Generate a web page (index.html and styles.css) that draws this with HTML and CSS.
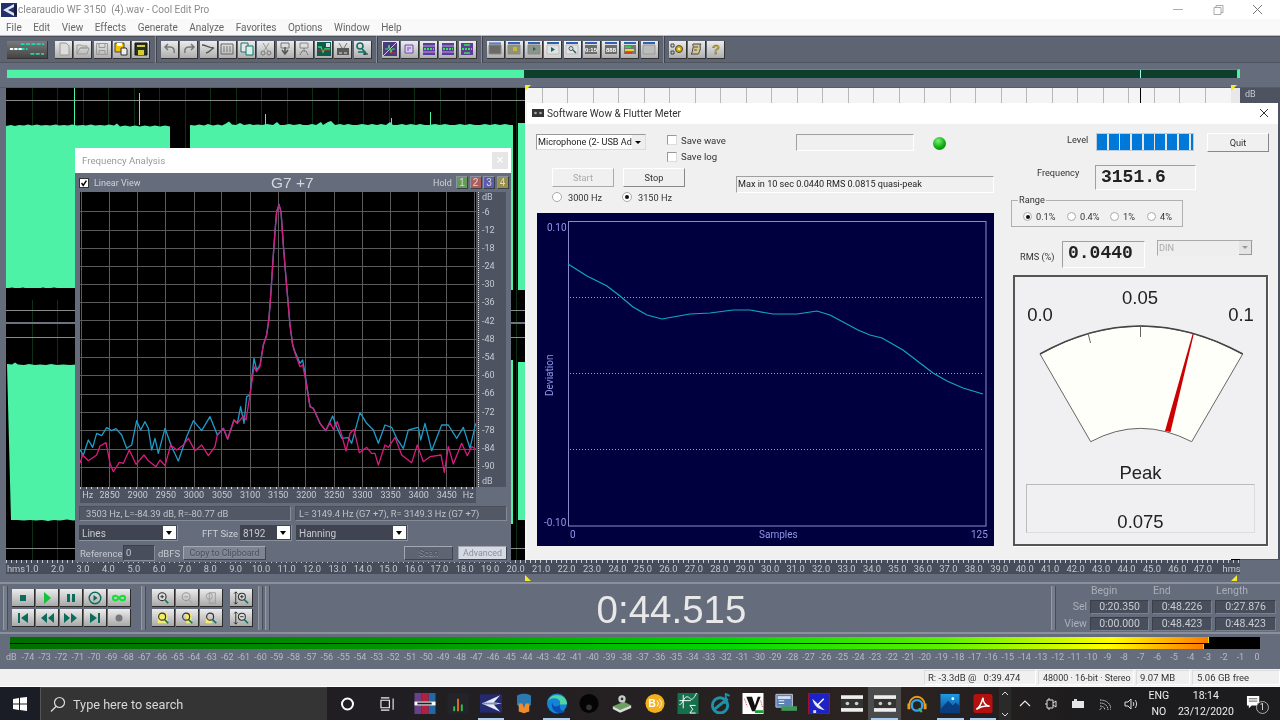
FILE: index.html
```html
<!DOCTYPE html>
<html lang="en">
<head>
<meta charset="utf-8">
<title>clearaudio WF 3150 (4).wav - Cool Edit Pro</title>
<link rel="stylesheet" href="styles.css">
</head>
<body>
<div class="screen">
  <header class="titlebar">
    <svg class="appicon" viewBox="0 0 16 14"><rect width="16" height="14" fill="#23306e"/><path d="M2 7 13 1v3L7 7l6 3v3z" fill="#dfe6f5"/><path d="M13 2h3v10h-3z" fill="#1a1a3a"/></svg>
    <span class="titletext">clearaudio WF 3150&nbsp; (4).wav - Cool Edit Pro</span>
    <span class="winctl">
      <svg viewBox="3 0 40 19"><path d="M18 9.500h10" stroke="#aaa" fill="none"/></svg>
      <svg viewBox="3 0 40 19"><path d="M19 7.500h7v7h-7zM21 7.500V5.500h7v7h-2" stroke="#aaa" fill="none"/></svg>
      <svg viewBox="3 0 40 19"><path d="m18 5 9 9m0-9-9 9" stroke="#777" fill="none"/></svg>
    </span>
  </header>
  <nav class="menubar">
    <span>File</span><span>Edit</span><span>View</span><span>Effects</span><span>Generate</span><span>Analyze</span><span>Favorites</span><span>Options</span><span>Window</span><span>Help</span>
  </nav>

  <main class="app">
    <div class="toolbar">
      <button class="tb tb-wide"><svg viewBox="0 0 41 18"><path d="M3 9h18M14 4h24M24 14h14" stroke="#27d6b0" stroke-width="2" stroke-dasharray="4 1.500"/><path d="M3 9h12" stroke="#fff" stroke-width="2" stroke-dasharray="3 1.500"/></svg></button>
      <span class="tb-gap g6"></span>
      <button class="tb"><svg viewBox="0 0 14 14"><path d="M3 1h6l3 3v9H3z" fill="#ddd" stroke="#999"/></svg></button>
      <button class="tb"><svg viewBox="0 0 14 14"><path d="M1 12V3h4l1 1h5v2H4l-3 6h10l2-6H4" fill="none" stroke="#999"/></svg></button>
      <button class="tb"><svg viewBox="0 0 14 14"><path d="M1.500 1.500h11v11h-11zM4 1.500v4h6v-4M4 12.500v-4h6v4" fill="none" stroke="#999"/></svg></button>
      <button class="tb"><svg viewBox="0 0 14 14"><path d="M1 1h9v9H1z" fill="#f2c200" stroke="#444"/><path d="M3 1h5v3H3z" fill="#fff"/><path d="M7 6h5l1 1v6H7z" fill="#eee" stroke="#333"/></svg></button>
      <button class="tb"><svg viewBox="0 0 14 14"><path d="M1 1h12v12H1z" fill="#23351f" stroke="#111"/><path d="M3 3h8v2H3z" fill="#d8c93a"/><path d="M4 8h6v5H4z" fill="#d8c93a"/></svg></button>
      <span class="tb-sep s11"></span>
      <button class="tb"><svg viewBox="0 0 14 14"><path d="M11 11c1-4-1-6-4-6H3M5 2 2 5l3 3" fill="none" stroke="#777" stroke-width="1.500"/></svg></button>
      <button class="tb"><svg viewBox="0 0 14 14"><path d="M3 11C2 7 4 5 7 5h4M9 2l3 3-3 3" fill="none" stroke="#777" stroke-width="1.500"/></svg></button>
      <button class="tb"><svg viewBox="0 0 14 14"><path d="M1 3c4 0 7 3 12 3-3 1-4 4-8 5" fill="none" stroke="#555" stroke-width="1.300"/></svg></button>
      <button class="tb"><svg viewBox="0 0 14 14"><path d="M1 2h12v10H1z" fill="none" stroke="#666"/><path d="M3 5h8M3 7h8M3 9h8" stroke="#777" stroke-dasharray="2 1"/></svg></button>
      <button class="tb"><svg viewBox="0 0 14 14"><path d="M1 1h7v9H1z" fill="#e8e8e8" stroke="#17756a"/><path d="M6 4h7v9H6z" fill="#d4f0e8" stroke="#17756a"/></svg></button>
      <button class="tb"><svg viewBox="0 0 14 14"><path d="m4 1 5 8M10 1 5 9" stroke="#999"/><circle cx="4" cy="11" r="2" fill="none" stroke="#777"/><circle cx="10" cy="11" r="2" fill="none" stroke="#777"/></svg></button>
      <button class="tb"><svg viewBox="0 0 14 14"><path d="M3 1h8v5H3z" fill="#ddd" stroke="#777"/><path d="M7 5v6M4 8l3 4 3-4" fill="none" stroke="#555" stroke-width="1.500"/></svg></button>
      <button class="tb"><svg viewBox="0 0 14 14"><path d="M3 1h8v5H3z" fill="#ddd" stroke="#888"/><path d="M7 6v3M3 13l2-4h4l2 4" fill="none" stroke="#666" stroke-dasharray="1.500 .5"/></svg></button>
      <button class="tb"><svg viewBox="0 0 14 14"><path d="M0 0h14v14H0z" fill="#0e5c50"/><path d="M1 5h3l2 5 2-3h5" fill="none" stroke="#2ee06a" stroke-width="1.300"/><path d="M1 8h12" stroke="#e02020"/><path d="M9 1h4v4H9z" fill="#ddd"/></svg></button>
      <button class="tb"><svg viewBox="0 0 14 14"><path d="M1 6h12v7H1z" fill="#5a5a5a"/><path d="m3 1 3 5m5-5L8 6" stroke="#777"/><path d="M3 11h3M8 11h3" stroke="#ddd"/></svg></button>
      <button class="tb"><svg viewBox="0 0 14 14"><circle cx="5" cy="4" r="3" fill="none" stroke="#136f63" stroke-width="1.600"/><path d="M7 7l3 3H3M10 10v3" fill="none" stroke="#136f63" stroke-width="1.600"/><path d="M8 12h5" stroke="#222"/></svg></button>
      <span class="tb-sep s10"></span>
      <button class="tb"><svg viewBox="0 0 14 14"><path d="M0 0h14v14H0z" fill="#4a3a7e"/><path d="m0 14 14-14" stroke="#d8c0f0"/><path d="M2 7h3l1-4 2 8 1-4h3" stroke="#3be05a" fill="none"/><path d="M7 11h6" stroke="#e02020"/></svg></button>
      <button class="tb"><svg viewBox="0 0 14 14"><path d="M3 3h8v8H3z" fill="#d9cdf0" stroke="#6a4eb0"/><path d="M5 6h4M5 8h2" stroke="#6a4eb0"/></svg></button>
      <button class="tb"><svg viewBox="0 0 14 14"><path d="M1 1h12v12H1z" fill="#5b3d97"/><path d="M1 4h12M1 10h12" stroke="#b6a0e0"/><path d="M2 7h10" stroke="#3be05a" stroke-width="2" stroke-dasharray="2 1"/></svg></button>
      <button class="tb"><svg viewBox="0 0 14 14"><path d="M1 1h12v12H1z" fill="#5b3d97"/><path d="M1 4h12M1 10h12" stroke="#b6a0e0"/><path d="M2 7h10" stroke="#3be05a" stroke-width="2" stroke-dasharray="2 1"/></svg></button>
      <button class="tb"><svg viewBox="0 0 14 14"><path d="M1 1h12v12H1z" fill="#5b3d97"/><path d="M4 3h6M4 11h6" stroke="#3be05a" stroke-width="1.500"/><path d="M2 7h10" stroke="#3be05a" stroke-width="2" stroke-dasharray="2 1"/></svg></button>
      <span class="tb-sep s10"></span>
      <button class="tb"><svg viewBox="0 0 14 14"><path d="M1 1h12M1 2h12" stroke="#2d62b5"/><path d="M1 3h12v9H1z" fill="#6a6a66" stroke="#888"/></svg></button>
      <button class="tb"><svg viewBox="0 0 14 14"><path d="M1 1h12" stroke="#2d62b5" stroke-width="2"/><path d="M1 3h12v9H1z" fill="#92927a" stroke="#888"/><path d="M6 5h4v4H6z" fill="#c0b840"/></svg></button>
      <button class="tb"><svg viewBox="0 0 14 14"><path d="M1 1h12" stroke="#2d62b5" stroke-width="2"/><path d="M1 3h12v9H1z" fill="#8a9488" stroke="#888"/><path d="m6 5 3 2-3 2z" fill="#176a60"/></svg></button>
      <button class="tb tb-lit"><svg viewBox="0 0 14 14"><path d="M1 1h12" stroke="#2d62b5" stroke-width="2"/><path d="M1 3h12v9H1z" fill="#dfe3e6" stroke="#bbb"/><path d="m5 5 4 2.500L5 10z" fill="#176a60"/></svg></button>
      <button class="tb tb-lit"><svg viewBox="0 0 14 14"><path d="M1 1h12" stroke="#2d62b5" stroke-width="2"/><path d="M1 3h12v9H1z" fill="#dfe3e6" stroke="#bbb"/><circle cx="6" cy="6.500" r="2" fill="none" stroke="#555"/><path d="m8 8 3 3" stroke="#176a60" stroke-width="1.500"/></svg></button>
      <button class="tb"><svg viewBox="0 0 14 14"><path d="M1 1h12" stroke="#2d62b5" stroke-width="2"/><path d="M1 3h12v9H1z" fill="#6c6c6c"/><text x="7" y="10" class="tbtxt">0:15</text></svg></button>
      <button class="tb"><svg viewBox="0 0 14 14"><path d="M1 1h12" stroke="#2d62b5" stroke-width="2"/><path d="M1 3h12v9H1z" fill="#6c6c6c"/><text x="7" y="10" class="tbtxt">888</text></svg></button>
      <button class="tb"><svg viewBox="0 0 14 14"><path d="M1 1h12" stroke="#2d62b5" stroke-width="2"/><path d="M1 3h12v9H1z" fill="#777"/><path d="M2 4h6v2H2z" fill="#2fd04a"/><path d="M2 7h9v2H2z" fill="#e8d82c"/><path d="M2 10h7v2H2z" fill="#e03a20"/></svg></button>
      <button class="tb"><svg viewBox="0 0 14 14"><path d="M1 1h12" stroke="#2d62b5" stroke-width="2"/><path d="M1 3h12v9H1z" fill="#bdbdbd" stroke="#999"/></svg></button>
      <span class="tb-sep s10"></span>
      <button class="tb"><svg viewBox="0 0 14 14"><path d="M1 2h3v3H1zM1 9h3v3H1z" fill="none" stroke="#444"/><circle cx="9" cy="7" r="3.500" fill="#d8b000" stroke="#444"/><circle cx="9" cy="7" r="1" fill="#fff"/></svg></button>
      <button class="tb"><svg viewBox="0 0 14 14"><path d="M4 2h8c-2 2 0 4-1 6-1 2-1 4-2 4H2c2-1 1-4 2-6s-1-3 0-4z" fill="#d8c890" stroke="#444"/><path d="M5 5h4M5 8h3" stroke="#555"/></svg></button>
      <button class="tb"><svg viewBox="0 0 14 14"><text x="7" y="12" class="tbq">?</text></svg></button>
    </div>

    <div class="overview">
      <div class="ov-sel"></div><div class="ov-rest"><i class="ov-mark"></i></div>
    </div>

    <div class="waverow">
      <svg class="wave" viewBox="6 88 1234 472">
        <rect x="6" y="88" width="1234" height="472" fill="#000"/>
        <rect x="525" y="88" width="706" height="472" fill="#f4f4f4"/>
        <path d="M32.500 88v472M57.500 88v472M83.500 88v472M108.500 88v472M134.500 88v472M159.500 88v472M185.500 88v472M210.500 88v472M236.500 88v472M261.500 88v472M287.500 88v472M312.500 88v472M338.500 88v472M363.500 88v472M389.500 88v472M414.500 88v472M440.500 88v472M465.500 88v472M491.500 88v472M516.500 88v472" stroke="#0c2f16" fill="none"/>
        <path d="M542.500 88v15M567.500 88v15M593.500 88v15M618.500 88v15M644.500 88v15M669.500 88v15M695.500 88v15M720.500 88v15M746.500 88v15M771.500 88v15M797.500 88v15M822.500 88v15M848.500 88v15M873.500 88v15M899.500 88v15M924.500 88v15M950.500 88v15M975.500 88v15M1001.500 88v15M1026.500 88v15M1052.500 88v15M1077.500 88v15M1103.500 88v15M1128.500 88v15M1154.500 88v15M1179.500 88v15M1205.500 88v15" stroke="#b8b8b8" fill="none"/>
        <path d="M6 100.500h519M6 310.500h519M6 337.500h519M6 548.500h519" stroke="#8a8a8a" fill="none"/>
        <path d="M6 323h519" stroke="#6c7280" stroke-width="2" fill="none"/>
        <path d="M1140.500 88v15" stroke="#000" fill="none"/>
        <path d="M6 126l5-1 4 1 4-1 5 .5 4-1 4 1 5-1 4 1 5-.5 4 .5 6-1 3 1 5-.5 4 .5 4-1 5 1 6-.5 3 .5 5-1 4 1 5-.5 5 .5 4-1 5 1 3-2 3 3 5-1 5 1 5-1 5 1 5-1 5 1 5-1 5 1 5-1 5 1 V288 L6 288Z" fill="#4df2a7"/>
        <path d="M190 125l5 .5 4-1 5 1 4-1.500 5 1.500 5-1 4 1 4-2 3-2 3 3 4 .5 4-2 4 2 6-1 3 1 5-.5 4 .5 5-1 6 1 4-3 3 3 4 0 5-1 5 1 6-1 3 1 5 0 4-1 4 1 5-3 2 3 5-3 3-1 4 4 5-1 4 1 4-1 5 1 4 0 5-1 6 1 4-1 5 1 4-1 5 1 4-3 3 3 4 0 5-1 4 1 5-1 5 1 4-1 5 1 4 0 6-1 5 1 5-1 5 1 5 0 5-1 5 1 5-1 5 1 5 0 5-1 5 1 5-1 5 1 5-1 5 1 3 0 V290 H190Z" fill="#4df2a7"/>
        <path d="M518 123h7v167h-7z" fill="#4df2a7"/>
        <path d="M6 288.500l6-1 5 1 6-1 4 1 6-.5 5 .5 5-1 5 1 6-1 6 1 6 0 6 0V300H6Z" fill="#000"/>
        <path d="M7 364l5 .5 3-2 3 2 6 .5 5-1 6 1 5-.5 6 .5 5-1 6 1 6-.5 7 .5 6-.5 3 .5V520l-6 .5-6-1-7 1-6-.5-6 1-6-1-6 .5-6-.5-6 .5-7-.5-6 0Z" fill="#4df2a7"/>
        <path d="M511 360h2v164h-2zM518 362h7v158h-7z" fill="#4df2a7"/>
        <path d="M74.500 88v37M139.500 93v32M265.500 114v12M391.500 118v8M430.500 112v14" stroke="#4df2a7" fill="none"/>
        <path d="M1231 88h9v15h-9z" fill="#e8e8e8"/>
      </svg>
      <div class="dbstrip"><span>dB</span></div>
      <i class="flag flag-a"></i><i class="flag flag-b"></i>
    </div>

    <div class="ruler">
      <span class="r-unit">hms</span><span>1.0</span><span>2.0</span><span>3.0</span><span>4.0</span><span>5.0</span><span>6.0</span><span>7.0</span><span>8.0</span><span>9.0</span><span>10.0</span><span>11.0</span><span>12.0</span><span>13.0</span><span>14.0</span><span>15.0</span><span>16.0</span><span>17.0</span><span>18.0</span><span>19.0</span><span>20.0</span><span>21.0</span><span>22.0</span><span>23.0</span><span>24.0</span><span>25.0</span><span>26.0</span><span>27.0</span><span>28.0</span><span>29.0</span><span>30.0</span><span>31.0</span><span>32.0</span><span>33.0</span><span>34.0</span><span>35.0</span><span>36.0</span><span>37.0</span><span>38.0</span><span>39.0</span><span>40.0</span><span>41.0</span><span>42.0</span><span>43.0</span><span>44.0</span><span>45.0</span><span>46.0</span><span>47.0</span><span class="r-end">hms</span>
    </div>
    <div class="rulerfoot"><i class="flag flag-c"></i><i class="flag flag-d"></i></div>

    <div class="transport">
      <i class="grip g1"></i>
      <div class="tgrid t5">
        <button class="tp"><svg viewBox="0 0 16 14"><path d="M5 4h6v6H5z" fill="#0d6b5c"/></svg></button>
        <button class="tp"><svg viewBox="0 0 16 14"><path d="m5 1 7 6-7 6z" fill="#14c23c"/></svg></button>
        <button class="tp"><svg viewBox="0 0 16 14"><path d="M4 3h3v8H4zM9 3h3v8H9z" fill="#0d6b5c"/></svg></button>
        <button class="tp"><svg viewBox="0 0 16 14"><circle cx="8" cy="7" r="5.800" fill="none" stroke="#0d6b5c" stroke-width="1.400"/><path d="m6.500 4 4 3-4 3z" fill="#0d6b5c"/></svg></button>
        <button class="tp"><svg viewBox="0 0 16 14"><path d="M8 7c-2-3-6-3-6 0s4 3 6 0 6-3 6 0-4 3-6 0z" fill="none" stroke="#10e030" stroke-width="2"/></svg></button>
        <button class="tp"><svg viewBox="0 0 16 14"><path d="M3 2h2v10H3zM13 2v10L6 7z" fill="#0d6b5c"/></svg></button>
        <button class="tp"><svg viewBox="0 0 16 14"><path d="M8 2v10L2 7zM15 2v10L9 7z" fill="#0d6b5c"/></svg></button>
        <button class="tp"><svg viewBox="0 0 16 14"><path d="M1 2v10l6-5zM8 2v10l6-5z" fill="#0d6b5c"/></svg></button>
        <button class="tp"><svg viewBox="0 0 16 14"><path d="M3 2v10l7-5zM11 2h2v10h-2z" fill="#0d6b5c"/></svg></button>
        <button class="tp"><svg viewBox="0 0 16 14"><circle cx="8" cy="7" r="3.500" fill="#777"/></svg></button>
      </div>
      <i class="grip g2"></i>
      <div class="tgrid t3">
        <button class="tp"><svg viewBox="0 0 16 16"><circle cx="7" cy="6.500" r="4.500" fill="#ddd" stroke="#333" stroke-width="1.300"/><path d="M5 6.500h4M7 4.500v4" stroke="#222"/><path d="m10 10 4 4" stroke="#0f7464" stroke-width="2"/></svg></button>
        <button class="tp"><svg viewBox="0 0 16 16"><circle cx="7" cy="6.500" r="4.500" fill="none" stroke="#999" stroke-width="1.200"/><path d="M5 6.500h4" stroke="#999"/><path d="m10 10 4 4" stroke="#a5b0ae" stroke-width="2"/></svg></button>
        <button class="tp"><svg viewBox="0 0 16 16"><path d="M6 2h7v12H6z" fill="none" stroke="#999"/><circle cx="6" cy="6" r="3.500" fill="none" stroke="#999"/></svg></button>
        <button class="tp"><svg viewBox="0 0 16 16"><path d="M2 2h11v12H2z" fill="#f4ec6c"/><circle cx="7" cy="6.500" r="4" fill="none" stroke="#333" stroke-width="1.300"/><path d="m10 10 4 4" stroke="#0f7464" stroke-width="2"/></svg></button>
        <button class="tp"><svg viewBox="0 0 16 16"><path d="M7 3h6v11H7z" fill="#f4ec6c"/><circle cx="7" cy="6.500" r="4" fill="none" stroke="#333" stroke-width="1.300"/><path d="m10 10 4 4" stroke="#0f7464" stroke-width="2"/></svg></button>
        <button class="tp"><svg viewBox="0 0 16 16"><path d="M2 9h7v5H2z" fill="#f4ec6c"/><circle cx="7" cy="6.500" r="4" fill="none" stroke="#333" stroke-width="1.300"/><path d="m10 10 4 4" stroke="#0f7464" stroke-width="2"/></svg></button>
      </div>
      <div class="tgrid t1">
        <button class="tp"><svg viewBox="0 0 18 16"><path d="M3 1v14M1 3l2-2 2 2M1 13l2 2 2-2" fill="none" stroke="#222"/><circle cx="10" cy="6.500" r="4" fill="#ddd" stroke="#333" stroke-width="1.200"/><path d="M8 6.500h4M10 4.500v4" stroke="#222"/><path d="m13 10 4 4" stroke="#0f7464" stroke-width="2"/></svg></button>
        <button class="tp"><svg viewBox="0 0 18 16"><path d="M3 1v14M1 3l2-2 2 2M1 13l2 2 2-2" fill="none" stroke="#222"/><circle cx="10" cy="6.500" r="4" fill="#ddd" stroke="#333" stroke-width="1.200"/><path d="M8 6.500h4" stroke="#222"/><path d="m13 10 4 4" stroke="#0f7464" stroke-width="2"/></svg></button>
      </div>
      <i class="grip g3"></i><i class="grip g4"></i>
      <div class="clock">0:44.515</div>
      <i class="grip g5"></i>
      <div class="selview">
        <span></span><span class="sv-h">Begin</span><span class="sv-h">End</span><span class="sv-h">Length</span>
        <span class="sv-l">Sel</span><span class="sv-v">0:20.350</span><span class="sv-v">0:48.226</span><span class="sv-v">0:27.876</span>
        <span class="sv-l">View</span><span class="sv-v">0:00.000</span><span class="sv-v">0:48.423</span><span class="sv-v">0:48.423</span>
      </div>
    </div>

    <div class="meter">
      <div class="meterbars">
        <div class="mb"><div class="mfill" style="width:1199px"></div></div>
        <div class="mb"><div class="mfill" style="width:1194px"></div></div>
      </div>
      <div class="mscale">
        <span>dB</span><span>-74</span><span>-73</span><span>-72</span><span>-71</span><span>-70</span><span>-69</span><span>-68</span><span>-67</span><span>-66</span><span>-65</span><span>-64</span><span>-63</span><span>-62</span><span>-61</span><span>-60</span><span>-59</span><span>-58</span><span>-57</span><span>-56</span><span>-55</span><span>-54</span><span>-53</span><span>-52</span><span>-51</span><span>-50</span><span>-49</span><span>-48</span><span>-47</span><span>-46</span><span>-45</span><span>-44</span><span>-43</span><span>-42</span><span>-41</span><span>-40</span><span>-39</span><span>-38</span><span>-37</span><span>-36</span><span>-35</span><span>-34</span><span>-33</span><span>-32</span><span>-31</span><span>-30</span><span>-29</span><span>-28</span><span>-27</span><span>-26</span><span>-25</span><span>-24</span><span>-23</span><span>-22</span><span>-21</span><span>-20</span><span>-19</span><span>-18</span><span>-17</span><span>-16</span><span>-15</span><span>-14</span><span>-13</span><span>-12</span><span>-11</span><span>-10</span><span>-9</span><span>-8</span><span>-7</span><span>-6</span><span>-5</span><span>-4</span><span>-3</span><span>-2</span><span>-1</span><span>0</span>
      </div>
    </div>
  </main>

  <footer class="statusbar">
    <span class="sb s-a">R: -3.3dB @&nbsp;&nbsp; 0:39.474</span>
    <span class="sb s-b">48000 · 16-bit · Stereo</span>
    <span class="sb s-c">9.07 MB</span>
    <span class="sb s-d">5.06 GB free</span>
  </footer>

  <div class="taskbar">
    <span class="start"><svg viewBox="0 0 14 14"><path d="M0 2l6-1v5.500H0zM7 .8 14 0v6.500H7zM0 7.500h6V13l-6-1zM7 7.500h7V14l-7-1z" fill="#fff"/></svg></span>
    <span class="search"><svg viewBox="0 0 16 16"><circle cx="9.500" cy="6.500" r="5" fill="none" stroke="#ddd" stroke-width="1.200"/><path d="M6 10.500 1 15.500" stroke="#ddd" stroke-width="1.200"/></svg>Type here to search</span>
    <span class="tk-sys"><svg viewBox="0 0 14 14"><circle cx="7" cy="7" r="5.500" fill="none" stroke="#fff" stroke-width="2"/></svg></span>
    <span class="tk-sys"><svg viewBox="0 0 16 14"><path d="M1 3h9v8H1zM1 .5h9M1 13.500h9M14 1v12" fill="none" stroke="#eee" stroke-width="1.200"/></svg></span>
    <span class="tk"><svg viewBox="0 0 22 22"><path d="M0 0h7v22H0z" fill="#6a4088"/><path d="M7 0h8v22H7z" fill="#b02040"/><path d="M15 0h7v22h-7z" fill="#2068a8"/><path d="M0 9h22v4H0z" fill="#fff"/><path d="M3 10h15v2H3z" fill="#222"/></svg></span>
    <span class="tk"><svg viewBox="0 0 22 22"><path d="M0 0h22v22H0z" fill="#22242a"/><path d="M6 14h2v5H6z" fill="#2fbf4a"/><path d="M10 6h2v13h-2z" fill="#e07020"/><path d="M14 12h2v7h-2z" fill="#2fbf4a"/></svg></span>
    <span class="tk on"><svg viewBox="0 0 24 22"><path d="M0 1h24v20H0z" fill="#242a70"/><path d="M2 11 22 2l-7 8 9 1-9 1 7 8z" fill="#e8ecf8"/><path d="M3 10h16v2H3z" fill="#8090c0"/></svg></span>
    <span class="tk"><svg viewBox="0 0 22 24"><path d="M3 3c4-3 12-3 16 0v10l-8 10-8-10z" fill="#2a7ab0"/><path d="M5 12h4l2 5 2-5h4v9l-6 2-6-2z" fill="#ef8b2c"/></svg></span>
    <span class="tk on"><svg viewBox="0 0 22 22"><circle cx="11" cy="11" r="10.500" fill="#1583d8"/><path d="M21.500 11C21 5 16 2 11 2 6 2 2.500 5 1 9c2-3 6-4 10-3 3 1 4 3 3 6h7z" fill="#52d6a0"/><path d="M14 12c-2 3-8 3-8-2-2 6 3 11 8 11 3 0 5-1 6-2-3 1-7-2-6-7z" fill="#0a4fb0"/></svg></span>
    <span class="tk"><svg viewBox="0 0 22 22"><circle cx="11" cy="11" r="10" fill="#050505"/><circle cx="11" cy="15" r="3" fill="#333"/></svg></span>
    <span class="tk"><svg viewBox="0 0 24 22"><path d="M2 14 14 9l8 4-12 6z" fill="#6da060"/><path d="M2 14v3l8 4v-3zM22 13v3l-12 5v-3z" fill="#ddd"/><circle cx="12" cy="6" r="4" fill="#ccc"/><circle cx="12" cy="6" r="1.500" fill="#333"/></svg></span>
    <span class="tk"><svg viewBox="0 0 22 22"><circle cx="11" cy="11" r="10" fill="#f3b21c"/><text x="4" y="15" class="tkb">B</text><path d="M13 8c2 2 2 4 0 6M15.500 6.500c3 3 3 6 0 9" fill="none" stroke="#fff"/></svg></span>
    <span class="tk"><svg viewBox="0 0 22 22"><path d="M0 0h22v22H0z" fill="#15704c"/><path d="M2 12c4 0 4-8 8-8s4 8 10-4M6 2v14M2 8h12" fill="none" stroke="#fff"/><path d="M19 13h-6l3 4-3 4h6" fill="none" stroke="#fff"/></svg></span>
    <span class="tk"><svg viewBox="0 0 22 22"><circle cx="10" cy="13" r="8" fill="none" stroke="#1c93a8" stroke-width="3"/><path d="M3 18 18 6" stroke="#1c93a8" stroke-width="3"/><path d="M16 7V1l4 2M12 9l4 2" fill="none" stroke="#1c93a8" stroke-width="2"/></svg></span>
    <span class="tk"><svg viewBox="0 0 22 22"><path d="M0 0h22v22H0z" fill="#fff"/><path d="M4 4h6l3 9 3-9h3l-6 15h-3z" fill="#111"/><path d="M2 6l3 8M19 8l2 7" stroke="#c33" stroke-dasharray="1 1"/><path d="M13 18h9v3h-9z" fill="#1e9e3a"/></svg></span>
    <span class="tk"><svg viewBox="0 0 24 22"><path d="M1 1h18v14H1z" fill="#5a82b8" stroke="#ccd"/><path d="M3 3h14v3H3z" fill="#d7e3f3"/><path d="M4 8h6M4 11h6" stroke="#fff"/><path d="M7 14h17v5H7z" fill="#3f9858"/></svg></span>
    <span class="tk"><svg viewBox="0 0 22 22"><path d="M0 0h22v22H0z" fill="#1a22c8" stroke="#a01030" stroke-width="1.500"/><path d="M4 6c2 8 6 11 13 12z" fill="#e8e8e8"/><path d="m9 13 7-7" stroke="#fff" stroke-width="1.500"/><path d="M5 18h3v3H5z" fill="#ddd"/></svg></span>
    <span class="tk"><svg viewBox="0 0 24 18"><path d="M0 0h24v18H0z" fill="#eee"/><path d="M0 4h24v10H0z" fill="#333"/><circle cx="7" cy="9" r="2" fill="#ccc"/><circle cx="17" cy="9" r="2" fill="#ccc"/></svg></span>
    <span class="tk on cur"><svg viewBox="0 0 24 18"><path d="M0 0h24v18H0z" fill="#eee"/><path d="M0 4h24v10H0z" fill="#333"/><circle cx="7" cy="9" r="2" fill="#ccc"/><circle cx="17" cy="9" r="2" fill="#ccc"/></svg></span>
    <span class="tk"><svg viewBox="0 0 22 22"><path d="M3 12a8 8 0 0 1 16 0" fill="none" stroke="#f09a1a" stroke-width="2"/><path d="M1 11h3v6H1zM18 11h3v6h-3z" fill="#f09a1a"/><circle cx="11" cy="13" r="5.500" fill="none" stroke="#2da5e8" stroke-width="2.500"/><path d="m13 16 3 4" stroke="#45c05a" stroke-width="2"/></svg></span>
    <span class="tk on"><svg viewBox="0 0 22 22"><defs><linearGradient id="ph" x1="0" y1="0" x2="0" y2="1"><stop offset="0" stop-color="#1c9be8"/><stop offset="1" stop-color="#0d4c96"/></linearGradient></defs><path d="M1 1h20v20H1z" fill="url(#ph)"/><path d="M1 17 9 8l5 5 3-3 4 4v7H1z" fill="#0a3d7e"/><circle cx="14" cy="6" r="1.500" fill="#fff"/></svg></span>
    <span class="tk on"><svg viewBox="0 0 22 22"><rect x="1" y="1" width="20" height="20" rx="3" fill="#b41010"/><path d="M4 17c3-1 5-5 7-12 0 5 2 8 7 9-5-1-9 0-14 3z" fill="none" stroke="#fff" stroke-width="1.600"/></svg></span>
    <span class="tk-more"><svg viewBox="0 0 8 33"><path d="m1 8 3-3 3 3M1 26l3 3 3-3" fill="none" stroke="#ddd"/></svg></span>
    <span class="tray"><svg viewBox="0 0 14 14"><path d="m2 9 5-5 5 5" fill="none" stroke="#eee" stroke-width="1.100"/></svg></span>
    <span class="tray"><svg viewBox="0 0 14 14"><path d="M3 3h6v8H3zM9 6l3-2v6l-3-2M1 7h2M5 1v2M5 11v2" fill="none" stroke="#ddd"/></svg></span>
    <span class="tray"><svg viewBox="0 0 14 14"><path d="M1 4h12v7H1z" fill="#e6e6e6"/><path d="M3 2h3v2H3z" fill="#ddd"/></svg></span>
    <span class="tray"><svg viewBox="0 0 14 14"><path d="M3 13a2 2 0 0 1 2-2M3 9c3 0 5 2 5 4M3 6c5 0 8 3 8 7M3 3c7 0 11 4 11 10" fill="none" stroke="#ccc" stroke-dasharray="1.500 .7"/></svg></span>
    <span class="tray"><svg viewBox="0 0 14 14"><path d="M1 5h3l3-3v10L4 9H1z" fill="none" stroke="#ddd"/><path d="M9 5c1 1 1 3 0 4M11 3c2 2 2 6 0 8" fill="none" stroke="#ddd"/></svg></span>
    <span class="lang"><span>ENG</span><span>NO</span></span>
    <span class="tclock"><span>18:14</span><span>23/12/2020</span></span>
    <span class="notif"><svg viewBox="0 0 18 18"><path d="M1 1h13v10H6l-3 3v-3H1z" fill="#fff"/><path d="M3 4h9M3 6.500h9" stroke="#555"/></svg><b>1</b></span>
  </div>

  <section class="win fa">
    <div class="fa-title"><span>Frequency Analysis</span><i class="fa-x">×</i></div>
    <div class="fa-head">
      <span class="check"><svg viewBox="0 0 10 10"><path d="m2 5 2 3 4-6" fill="none" stroke="#000" stroke-width="1.800"/></svg></span>
      <span class="lv">Linear View</span>
      <span class="note">G7 +7</span>
      <span class="hold">Hold</span>
      <span class="hb h1">1</span><span class="hb h2">2</span><span class="hb h3">3</span><span class="hb h4">4</span>
    </div>
    <div class="fa-plotrow">
      <svg class="plot" viewBox="80 192 396 295">
        <rect x="80" y="192" width="396" height="295" fill="#000"/>
        <path d="M81.500 192v295M109.500 192v295M137.500 192v295M165.500 192v295M194.500 192v295M221.500 192v295M250.500 192v295M278.500 192v295M305.500 192v295M334.500 192v295M362.500 192v295M390.500 192v295M418.500 192v295M446.500 192v295M474.500 192v295" stroke="#5a5a5a" fill="none"/>
        <path d="M80 211.500h396M80 230.500h396M80 248.500h396M80 266.500h396M80 284.500h396M80 302.500h396M80 320.500h396M80 339.500h396M80 357.500h396M80 375.500h396M80 394.500h396M80 412.500h396M80 430.500h396M80 449.500h396M80 467.500h396" stroke="#5a5a5a" fill="none"/>
        <g transform="translate(80 340) scale(.33333)">
          <polyline class="cv cv-b" points="0,330 10,345 25,300 38,322 50,280 65,287 80,263 95,272 108,266 125,285 140,325 155,315 170,242 182,270 195,245 205,265 215,330 225,295 235,340 255,265 275,320 295,363 320,290 340,242 365,272 390,230 412,285 430,265 443,297 462,240 472,250 482,200 492,250 500,170 510,165 522,55 530,90 540,75 550,15 560,-15 567,-65 573,-145 580,-255 585,-325 590,-385 597,-407 603,-385 610,-285 618,-185 630,-45 638,15 645,35 660,70 668,60 675,100 690,200 700,205 720,250 737,272 758,228 770,260 785,295 805,293 815,310 840,218 860,250 880,270 895,310 915,255 935,262 950,295 970,325 985,270 1015,262 1022,300 1035,250 1055,332 1085,255 1105,255 1130,295 1150,262 1170,325 1187,250"/>
          <polyline class="cv cv-p" points="0,370 8,345 25,362 50,345 60,318 78,308 90,370 100,395 118,367 130,370 148,330 168,373 192,345 205,362 228,380 240,360 255,377 272,315 290,330 310,315 325,295 345,332 365,315 385,347 405,320 412,285 430,265 443,297 462,240 472,250 490,228 498,240 510,165 522,80 530,95 540,80 550,15 560,-15 567,-65 573,-145 580,-255 585,-325 590,-385 597,-405 603,-385 610,-285 618,-185 630,-45 638,15 645,40 660,80 668,75 675,110 690,200 700,205 720,250 737,272 750,248 760,268 772,245 785,285 798,333 810,280 822,268 838,338 860,322 875,340 885,340 895,375 915,315 925,322 945,292 965,345 995,368 1012,315 1030,365 1050,350 1083,345 1093,397 1105,320 1120,372 1145,310 1162,347 1175,320 1187,328"/>
        </g>
      </svg>
      <div class="fa-db">
        <span class="d0">dB</span><span>-6</span><span>-12</span><span>-18</span><span>-24</span><span>-30</span><span>-36</span><span>-42</span><span>-48</span><span>-54</span><span>-60</span><span>-66</span><span>-72</span><span>-78</span><span>-84</span><span>-90</span><span class="d1">dB</span>
      </div>
    </div>
    <div class="fa-hz">
      <span class="hz0">Hz</span><span>2850</span><span>2900</span><span>2950</span><span>3000</span><span>3050</span><span>3100</span><span>3150</span><span>3200</span><span>3250</span><span>3300</span><span>3350</span><span>3400</span><span>3450</span><span class="hz1">Hz</span>
    </div>
    <div class="fa-info">
      <span class="inf inf-l">3503 Hz, L=-84.39 dB, R=-80.77 dB</span>
      <span class="inf inf-r">L= 3149.4 Hz (G7 +7), R= 3149.3 Hz (G7 +7)</span>
    </div>
    <div class="fa-sel">
      <span class="dd dd-a">Lines<i></i></span>
      <span class="fft">FFT Size</span>
      <span class="dd dd-b">8192<i></i></span>
      <span class="dd dd-c">Hanning<i></i></span>
    </div>
    <div class="fa-bot">
      <span class="ref">Reference</span><span class="refv">0</span><span class="dbfs">dBFS</span>
      <span class="bbtn copy">Copy to Clipboard</span>
      <span class="bbtn scan">Scan</span>
      <span class="bbtn adv">Advanced</span>
    </div>
  </section>

  <section class="win wow">
    <div class="wow-title">
      <svg viewBox="0 0 12 8"><path d="M0 0h12v8H0z" fill="#333"/><circle cx="3.500" cy="4" r="1.300" fill="#aaa"/><circle cx="8.500" cy="4" r="1.300" fill="#aaa"/></svg>
      <span>Software Wow &amp; Flutter Meter</span>
      <svg class="wow-x" viewBox="0 0 10 10"><path d="m1 1 8 8m0-8-8 8" stroke="#333" fill="none"/></svg>
    </div>
    <div class="wow-body">
      <div class="wow-left">
        <div class="w-row1">
          <span class="combo">Microphone (2- USB Ad<i></i></span>
          <span class="checks">
            <label class="ck"><i></i>Save wave</label>
            <label class="ck"><i></i>Save log</label>
          </span>
          <span class="sunk blank"></span>
          <span class="led"></span>
        </div>
        <div class="w-row2">
          <div class="w-btns">
            <div class="w-btnrow"><span class="btn dis">Start</span><span class="btn stop">Stop</span></div>
            <div class="w-btnrow radios"><label class="rd"><i></i>3000 Hz</label><label class="rd sel"><i></i>3150 Hz</label></div>
          </div>
          <span class="sunk status">Max in 10 sec 0.0440 RMS 0.0815 quasi-peak</span>
        </div>
        <svg class="graph" viewBox="537 213 457 333">
          <rect x="537" y="213" width="457" height="333" fill="#00003e"/>
          <rect x="568.500" y="221.500" width="417.500" height="304.500" fill="none" stroke="#8a8cc8"/>
          <path d="M570 297.500h414M570 373.500h414M570 449.500h414" stroke="#9a9cd0" stroke-dasharray="1 2" fill="none"/>
          <polyline class="gcurve" points="568,264 587,276 607,286 620,296 633,307 647,315 662,319 673,317 690,314 710,313 733,310 750,310 773,314 797,314 817,311 830,315 858,330 870,335 882,338 903,350 933,373 947,381 963,388 983,394"/>
          <text x="547" y="231" class="gt">0.10</text>
          <text x="544" y="526" class="gt">-0.10</text>
          <text x="553" y="396" class="gt" transform="rotate(-90 553 396)">Deviation</text>
          <text x="570" y="538" class="gt">0</text>
          <text x="759" y="538" class="gt">Samples</text>
          <text x="971" y="538" class="gt">125</text>
        </svg>
      </div>
      <div class="wow-right">
        <div class="r-row1">
          <span class="lbl lvl">Level</span>
          <span class="level"></span>
          <span class="btn quit">Quit</span>
        </div>
        <div class="r-row2">
          <span class="lbl frq">Frequency</span>
          <span class="sunk lcd lcd-f">3151.6</span>
        </div>
        <div class="range">
          <span class="rlabel">Range</span>
          <label class="rd sel"><i></i>0.1%</label>
          <label class="rd"><i></i>0.4%</label>
          <label class="rd"><i></i>1%</label>
          <label class="rd"><i></i>4%</label>
        </div>
        <div class="r-row3">
          <span class="lbl rms">RMS (%)</span>
          <span class="sunk lcd lcd-r">0.0440</span>
          <span class="din">DIN<i></i></span>
        </div>
        <div class="gauge">
          <svg viewBox="1015 277 251 207">
            <text x="1040" y="321" class="gv" text-anchor="middle">0.0</text>
            <text x="1140" y="304" class="gv" text-anchor="middle">0.05</text>
            <text x="1241" y="321" class="gv" text-anchor="middle">0.1</text>
            <path d="M1040 354Q1140 298 1242.700 354L1191.700 441.700Q1140 415 1090.700 441.700Z" fill="#fffffa" stroke="#666"/>
            <path d="M1040 354Q1140 298 1242.700 354" fill="none" stroke="#444" stroke-width="1.500"/>
            <path d="m1088 333 2.500 10M1140.500 326v11" stroke="#666" fill="none"/>
            <path d="M1192.700 333.500 1193.800 334 1170.500 432 1165 431Z" fill="#cc0000"/>
            <text x="1140.500" y="479" class="gp" text-anchor="middle">Peak</text>
          </svg>
          <div class="peakbox">0.075</div>
        </div>
      </div>
    </div>
  </section>
</div>
</body>
</html>
```
FILE: styles.css
```css
* { box-sizing: border-box; }
html, body { margin: 0; padding: 0; }
body { width: 1280px; height: 720px; overflow: hidden; background: #fff; font-family: Roboto, "Liberation Sans", sans-serif; }
button { margin: 0; padding: 0; font: inherit; }
svg { display: block; }
i { font-style: normal; }
.screen { position: relative; width: 1280px; height: 720px; display: flex; flex-direction: column; overflow: hidden; filter: blur(.35px); }

.titlebar { height: 19px; display: flex; align-items: center; background: #fff; padding-left: 1px; }
.appicon { width: 16px; height: 14px; margin-top: 1px; }
.titletext { margin-left: 1px; font-size: 10px; color: #8b8b8b; white-space: nowrap; }
.winctl { margin-left: auto; margin-right: 2px; display: flex; }
.winctl svg { width: 40px; height: 19px; }

.menubar { height: 17px; display: flex; gap: 11.500px; padding-left: 6px; align-items: center; background: #f9f9f9; font-size: 10px; color: #666; border-bottom: 1px solid #bbb; }

.app { height: 633px; background: #656c7b; display: flex; flex-direction: column; }

.toolbar { height: 27px; display: flex; align-items: center; padding-left: 7px; gap: 1.250px; border-top: 1px solid #4a4f5a; border-bottom: 1px solid #50555f; background: #5e6472; }
.tb { width: 18px; height: 18px; border: 0; border-right: 1px solid #333; border-bottom: 1px solid #333; background: linear-gradient(#ececec, #aeaeae); display: flex; align-items: center; justify-content: center; }
.tb svg { width: 14px; height: 14px; }
.tb-wide { width: 41px; background: linear-gradient(#7a7a7a, #444); }
.tb-wide svg { width: 41px; height: 18px; }
.tb-lit { background: linear-gradient(#f6f6f6, #cfcfcf); }
.tb-gap.g6 { width: 4.500px; }
.tb-sep { width: 2px; height: 27px; background: #878d9a; border-right: 1px solid #3f434d; }
.tb-sep.s11 { margin: 0 3.250px; }
.tb-sep.s10 { margin: 0 2.750px; }
.tbtxt { font: 700 6px "Liberation Sans", sans-serif; fill: #fff; text-anchor: middle; }
.tbq { font: 700 13px "Liberation Sans", sans-serif; fill: #c9a820; stroke: #555; stroke-width: .3px; text-anchor: middle; }

.overview { height: 25px; padding: 6px 40px 0 7px; display: flex; border-bottom: 1px solid #555b67; }
.ov-sel { width: 517px; height: 9px; background: #4df2a7; border-top: 1px solid #2fa478; }
.ov-rest { flex: 1; height: 9px; background: #0e3f2c; position: relative; border-top: 1px solid #2fa478; border-right: 3px solid #4df2a7; }
.ov-mark { position: absolute; left: 616px; top: 0; width: 1px; height: 8px; background: #9fe; }

.waverow { position: relative; height: 472px; display: flex; padding-left: 6px; }
.wave { width: 1234px; height: 472px; flex: none; }
.dbstrip { flex: 1; background: #4d5361; font-size: 9px; color: #c7cbd2; padding: 0 0 0 5px; line-height: 12px; }
.flag { position: absolute; width: 0; height: 0; border-top: 6px solid #f6ea2a; border-right: 6px solid transparent; }
.flag-a { left: 525px; top: -3px; }
.flag-b { left: 1231px; top: -3px; }
.flag-c { left: 525px; top: 1px; border-top: 0; border-bottom: 6px solid #f6ea2a; border-right: 6px solid transparent; }
.flag-d { left: 1231px; top: 1px; border-top: 0; border-bottom: 6px solid #f6ea2a; border-left: 6px solid transparent; border-right: 0; }

.ruler { height: 14px; margin: 0 40px 0 6px; display: flex; align-items: flex-end; background-color: #474d5a; background-image: repeating-linear-gradient(90deg, #c8ccd4 0 1px, transparent 1px 5.090px); background-size: 100% 3px; background-repeat: no-repeat; font-size: 9.300px; line-height: 11px; color: #c4c8ce; white-space: nowrap; }
.ruler span { flex: 0 0 25.460px; min-width: 0; text-align: center; }
.ruler .r-unit { flex: 0 0 13.300px; text-align: left; padding-left: 1px; }
.ruler .r-end { flex: 0 0 16px; margin-left: 7px; }

.rulerfoot { position: relative; height: 10px; border-bottom: 2px solid #8a909c; }

.transport { height: 50px; display: flex; align-items: center; border-bottom: 2px solid #8a909c; }
.grip { display: block; width: 5px; height: 44px; background: #767c8a; border-left: 1px solid #959aa5; border-right: 1px solid #484d58; flex: none; }
.grip.g1 { margin: 0 4px 0 3px; }
.grip.g2 { margin: 0 6px 0 9px; }
.grip.g3 { margin: 0 2px 0 5px; }
.grip.g5 { margin-right: 2px; }
.tgrid { display: grid; grid-auto-rows: 18px; row-gap: 2px; flex: none; }
.t5 { grid-template-columns: repeat(5, 24px); }
.t3 { grid-template-columns: repeat(3, 24px); }
.t1 { grid-template-columns: 23px; margin-left: 6px; }
.tp { width: 23px; height: 18px; border: 0; border-right: 1px solid #2b2b2b; border-bottom: 1px solid #2b2b2b; background: linear-gradient(#ececec, #a9a9a9); display: flex; align-items: center; justify-content: center; }
.tp svg { width: 16px; height: 14px; }
.clock { flex: 1; text-align: center; padding: 3px 0 0 22px; font: 38.500px "Liberation Sans", sans-serif; color: #e8e8e8; line-height: 44px; }
.selview { width: 222px; display: grid; grid-template-columns: 29px 59px 60px 61px; column-gap: 3px; grid-template-rows: 12px 14px 14px; row-gap: 3px; font-size: 10.500px; color: #c8ccd2; flex: none; margin-top: -1px; }
.sv-h { line-height: 12px; color: #a9aeb8; padding-left: 1px; }
.sv-l { text-align: right; line-height: 14px; color: #aab0ba; }
.sv-v { background: #484e5b; border: 1px solid #3a3f4a; border-right-color: #7a808d; border-bottom-color: #7a808d; text-align: center; line-height: 12px; }

.meter { height: 32px; padding: 3px 0 0 10px; }
.meterbars { width: 1250px; height: 12px; background: #000; display: flex; flex-direction: column; gap: 1px; }
.mb { height: 5.500px; position: relative; }
.mfill { height: 100%; border-right: 1px solid #e8e000; background: linear-gradient(90deg, #006e00 0, #009a00 35%, #00d800 60%, #5cf000 78%, #ffff00 92%, #ff7a00 100%); }
.mscale { display: flex; margin: 2px 0 0 -7px; font-size: 9px; line-height: 12px; color: #b6bbc4; white-space: nowrap; }
.mscale span { flex: 0 0 16.620px; text-align: center; }

.statusbar { height: 18px; display: flex; background: #f0f0f0; font-size: 9.500px; color: #333; padding: 1px 0 1px 924px; gap: 2px; border-bottom: 1px solid #fff; }
.sb { border: 1px solid #dcdcdc; border-bottom-color: #fff; border-right-color: #fff; line-height: 14px; padding-left: 3px; white-space: nowrap; overflow: hidden; }
.s-a { width: 112px; }
.s-b { width: 96px; padding-left: 4px; font-size: 9px; }
.s-c { width: 54px; }
.s-d { flex: 1; padding-left: 4px; }

.taskbar { height: 33px; display: flex; align-items: center; background: linear-gradient(90deg, #1a1d26 0, #231f22 40%, #2a2320 70%, #1d1c1e 85%, #1c1c1f 100%); color: #eee; }
.start { width: 40px; height: 33px; display: flex; align-items: center; justify-content: center; }
.start svg { width: 14px; height: 14px; }
.search { width: 287px; height: 33px; display: flex; align-items: center; background: #343434; border-left: 1px solid #555; border-top: 1px solid #444; color: #d8d8d8; font-size: 12.700px; padding-left: 9px; gap: 7px; }
.search svg { width: 16px; height: 16px; flex: none; }
.tk-sys { width: 40px; display: flex; justify-content: center; flex: none; }
.tk-sys svg { width: 15px; height: 14px; }
.tk-sys + .tk { margin-left: 2px; }
.tk { width: 32.800px; height: 33px; flex: none; display: flex; align-items: center; justify-content: center; position: relative; }
.tk svg { width: 22px; height: 21px; }
.tk.on::after { content: ""; position: absolute; left: 3px; right: 3px; bottom: 0; height: 2px; background: #a8cdf0; }
.tk.cur { background: #4b4b4b; }
.tk-more { width: 12px; height: 33px; background: #2a2a2a; flex: none; }
.tk-more svg { width: 12px; height: 33px; }
.tray { width: 26.500px; display: flex; justify-content: center; flex: none; }
.tray svg { width: 14px; height: 14px; }
.lang { width: 28px; margin-left: 1px; display: flex; flex-direction: column; align-items: center; font-size: 10.500px; line-height: 16px; flex: none; }
.tclock { width: 66px; display: flex; flex-direction: column; align-items: center; font-size: 10.500px; line-height: 16px; flex: none; }
.notif { width: 32px; position: relative; display: flex; justify-content: center; flex: none; }
.notif svg { width: 17px; height: 17px; }
.notif b { position: absolute; left: 17px; top: 6px; width: 13px; height: 13px; border-radius: 50%; background: #222; border: 1px solid #aaa; font: 400 9px/11px Roboto, sans-serif; text-align: center; }

.win { position: absolute; }

.fa { left: 75px; top: 148px; width: 436px; height: 414px; background: #656c7b; }
.fa-title { height: 25px; background: #fff; display: flex; align-items: center; padding: 0 0 1px 7px; font-size: 9.700px; color: #999; }
.fa-x { margin-left: auto; margin-right: 3px; width: 16px; height: 17px; background: #e6e6e6; color: #fff; text-align: center; line-height: 16px; font-size: 13px; }
.fa-head { height: 19px; display: flex; align-items: center; padding-left: 4px; color: #cfd3d9; font-size: 9px; }
.check { width: 10px; height: 10px; background: #fff; border: 1px solid #333; }
.check svg { width: 8px; height: 8px; }
.lv { margin-left: 5px; width: 177px; }
.note { font: 15.500px "Liberation Sans", sans-serif; color: #d4d8dc; width: 42px; white-space: nowrap; }
.hold { margin-left: 120px; width: 23px; }
.hb { width: 12px; height: 13px; margin-left: 1.500px; text-align: center; font: 10px/12px "Liberation Sans", sans-serif; color: #d8d8d8; border: 1px solid #8d939e; border-right-color: #3c4048; border-bottom-color: #3c4048; }
.h1 { background: #649a55; margin-left: 0; }
.h2 { background: #ac5d5c; }
.h3 { background: #5b5dac; }
.h4 { background: #96904f; }
.fa-plotrow { display: flex; height: 295px; margin-left: 5px; width: 426px; background: #4d5361; }
.plot { width: 396px; height: 295px; flex: none; }
.fa-db { flex: 1; display: flex; flex-direction: column; border-left: 1px dotted #ddd; margin-left: 2px; padding-top: 10.500px; font-size: 9px; line-height: 18.200px; color: #c6cad0; position: relative; padding-left: 3px; }
.fa-db span { height: 18.200px; }
.fa-db .d0 { position: absolute; top: 0; line-height: 10px; height: 10px; }
.fa-db .d1 { line-height: 14px; margin-top: -1px; }
.fa-hz { height: 16px; margin-left: 5px; width: 396px; display: flex; font-size: 9px; line-height: 17px; color: #c8ccd2; background-image: repeating-linear-gradient(90deg, #d4d8dd 0 1px, transparent 1px 5.600px); background-size: 100% 2px; background-repeat: no-repeat; background-color: #4d5361; white-space: nowrap; }
.fa-hz span { flex: 0 0 28.100px; text-align: center; }
.fa-hz .hz0 { flex: 0 0 15.600px; }
.fa-hz .hz1 { flex: 0 0 15px; }
.fa-info { display: flex; gap: 4px; margin: 3px 0 0 4px; }
.inf { width: 212px; height: 15px; background: #525865; border: 1px solid #4a4f5a; border-right-color: #858b98; border-bottom-color: #858b98; color: #bfc3ca; font-size: 9.300px; line-height: 13px; padding-left: 6px; white-space: nowrap; overflow: hidden; }
.inf-r { padding-left: 3px; }
.fa-sel { display: flex; align-items: center; margin: 4px 0 0 4px; height: 16px; }
.dd { position: relative; display: block; height: 16px; background: #3f4450; color: #c6cad0; font-size: 10px; line-height: 17px; padding-left: 3px; border-right: 1px solid #8a909c; border-bottom: 1px solid #8a909c; }
.dd i { position: absolute; right: 1px; top: 1px; width: 13px; height: 13px; background: #fff; }
.dd i::after { content: ""; position: absolute; left: 3px; top: 5px; border-top: 4px solid #000; border-left: 3.500px solid transparent; border-right: 3.500px solid transparent; }
.dd-a { width: 99px; }
.dd-b { width: 52px; }
.dd-c { width: 112px; margin-left: 4px; }
.fft { margin-left: 24px; width: 38px; font-size: 9.500px; color: #cdd1d6; white-space: nowrap; }
.fa-bot { display: flex; align-items: center; margin: 4px 0 0 5px; height: 16px; font-size: 9.500px; color: #c6cad0; }
.ref { width: 43px; }
.refv { width: 32px; height: 16px; background: #484e5b; border: 1px solid #3b404b; border-right-color: #858b98; border-bottom-color: #858b98; line-height: 14px; padding-left: 2px; }
.dbfs { width: 25px; margin-left: 3px; }
.bbtn { display: block; height: 14px; font-size: 8.900px; line-height: 13px; text-align: center; color: #4a4f5a; text-shadow: 0 1px 0 #8f96a3; background: #7d8493; border: 1px solid #a3a8b2; border-right-color: #3f444f; border-bottom-color: #3f444f; white-space: nowrap; }
.copy { width: 83px; }
.scan { width: 49px; margin-left: 138px; background: #5e6472; }
.adv { width: 49px; margin-left: 5px; background: #d6dae4; color: #8a8f9a; text-shadow: none; }

.wow { left: 527px; top: 103px; width: 751px; height: 456px; background: #f0f0f0; color: #333; }
.wow-title { height: 21px; background: #fff; display: flex; align-items: center; padding: 0 0 1px 5px; font-size: 10.100px; color: #333; }
.wow-title svg { width: 12px; height: 8px; margin-right: 3px; }
.wow-title .wow-x { width: 10px; height: 10px; margin: 0 9px 0 auto; }
.wow-body { display: flex; height: 435px; font-size: 9.200px; }
.wow-left { width: 470px; flex: none; }
.w-row1 { display: flex; height: 44px; padding: 10px 0 0 9px; }
.combo { position: relative; display: block; width: 110px; height: 16px; background: #fff; border: 1px solid #999; border-right-color: #ddd; border-bottom-color: #ddd; font-size: 9.100px; line-height: 14px; padding-left: 1px; white-space: nowrap; overflow: hidden; color: #222; }
.combo i { position: absolute; right: 0; top: 0; width: 13px; height: 14px; background: #eee; }
.combo i::after { content: ""; position: absolute; left: 3px; top: 6px; border-top: 3px solid #000; border-left: 3px solid transparent; border-right: 3px solid transparent; }
.checks { display: flex; flex-direction: column; margin-left: 21px; width: 129px; margin-top: -2px; font-size: 9.600px; }
.ck { display: flex; align-items: center; height: 16.500px; gap: 4px; white-space: nowrap; }
.ck i { width: 10px; height: 10px; background: #fff; border: 1px solid #999; border-right-color: #ddd; border-bottom-color: #ddd; }
.sunk { display: block; border: 1px solid #a0a0a0; border-right-color: #fff; border-bottom-color: #fff; background: #f0f0f0; }
.blank { width: 118px; height: 17px; }
.led { width: 13px; height: 13px; border-radius: 50%; margin: 3px 0 0 19px; background: radial-gradient(circle at 40% 30%, #7cf07c, #0fae0f 55%, #056905); }
.w-row2 { display: flex; height: 45px; padding-left: 25px; }
.w-btns { width: 184px; }
.w-btnrow { display: flex; gap: 9px; }
.btn { display: block; height: 19px; width: 62px; text-align: center; line-height: 17px; background: #f0f0f0; border: 1px solid #fff; border-right-color: #888; border-bottom-color: #888; color: #333; }
.btn.dis { color: #aaa; border-right-color: #aaa; border-bottom-color: #aaa; }
.radios { gap: 0; margin-top: 2px; height: 16px; }
.rd { display: flex; align-items: center; gap: 6px; white-space: nowrap; }
.radios .rd { width: 70px; }
.rd i { width: 10px; height: 10px; border-radius: 50%; background: #fff; border: 1px solid #aaa; position: relative; }
.rd.sel i::after { content: ""; position: absolute; left: 2px; top: 2px; width: 4px; height: 4px; border-radius: 50%; background: #111; }
.status { width: 258px; height: 17px; line-height: 15px; padding-left: 1px; margin-top: 8px; white-space: nowrap; font-size: 9.100px; color: #222; }
.graph { width: 457px; height: 333px; margin-left: 10px; }
.gt { font: 10px Roboto, sans-serif; fill: #9096e8; }
.gcurve { fill: none; stroke: #10a8c0; stroke-width: 1.200px; }
.wow-right { flex: 1; padding-top: 9px; }
.r-row1 { display: flex; height: 32px; }
.lbl { display: block; white-space: nowrap; color: #333; }
.lvl { margin-left: 70px; width: 29px; line-height: 13px; }
.level { display: block; width: 98px; height: 18px; border: 1px solid #bcd; background: repeating-linear-gradient(90deg, #0078d7 0 10px, #e6e6e6 10px 11.700px); }
.quit { margin-left: 13px; }
.r-row2 { display: flex; height: 35px; }
.frq { margin-left: 40px; width: 58px; line-height: 15px; }
.lcd { height: 25px; font: 700 18px "Liberation Mono", monospace; color: #222; padding-left: 5px; line-height: 22px; }
.lcd-f { width: 101px; }
.range { position: relative; display: grid; grid-template-columns: 44px 43px 37px 30px; margin-left: 14px; width: 172px; height: 27px; border: 1px solid #b0b0b0; padding: 5px 0 0 11px; }
.range .rd { gap: 4px; }
.range .rd i { width: 9px; height: 9px; }
.rlabel { position: absolute; left: 6px; top: -7px; background: #f0f0f0; padding: 0 1px; }
.r-row3 { display: flex; margin-top: 14px; height: 34px; }
.rms { margin: 10px 0 0 23px; width: 42px; }
.lcd-r { width: 83px; height: 27px; }
.din { position: relative; display: block; width: 96px; height: 16px; margin: -1px 0 0 12px; border: 1px solid #aaa; border-right-color: #eee; border-bottom-color: #eee; background: #eee; color: #aaa; line-height: 13px; padding-left: 1px; }
.din i { position: absolute; right: 0; top: 0; width: 13px; height: 14px; background: #e4e4e4; border-right: 1px solid #999; border-bottom: 1px solid #999; }
.din i::after { content: ""; position: absolute; left: 3px; top: 5px; border-top: 3px solid #999; border-left: 3px solid transparent; border-right: 3px solid transparent; }
.gauge { width: 255px; height: 271px; margin-left: 16px; border: 2px solid #555; background: #f0f0f3; box-shadow: 1px 1px 0 #fff; }
.gauge svg { width: 251px; height: 207px; }
.gv { font: 18.500px "Liberation Sans", sans-serif; fill: #222; }
.gp { font: 18.500px "Liberation Sans", sans-serif; fill: #222; }
.peakbox { width: 229px; height: 49px; margin-left: 11px; border: 1px solid #bbb; border-right-color: #ddd; border-bottom-color: #ddd; text-align: center; padding-top: 25px; font: 18.500px/24px "Liberation Sans", sans-serif; color: #222; }
.cv { fill: none; stroke-width: 1.300px; vector-effect: non-scaling-stroke; stroke-linejoin: round; }
.cv-b { stroke: #1d9ccb; }
.cv-p { stroke: #d81b7e; }
.tkb { font: 700 11px "Liberation Sans", sans-serif; fill: #fff; }
```
